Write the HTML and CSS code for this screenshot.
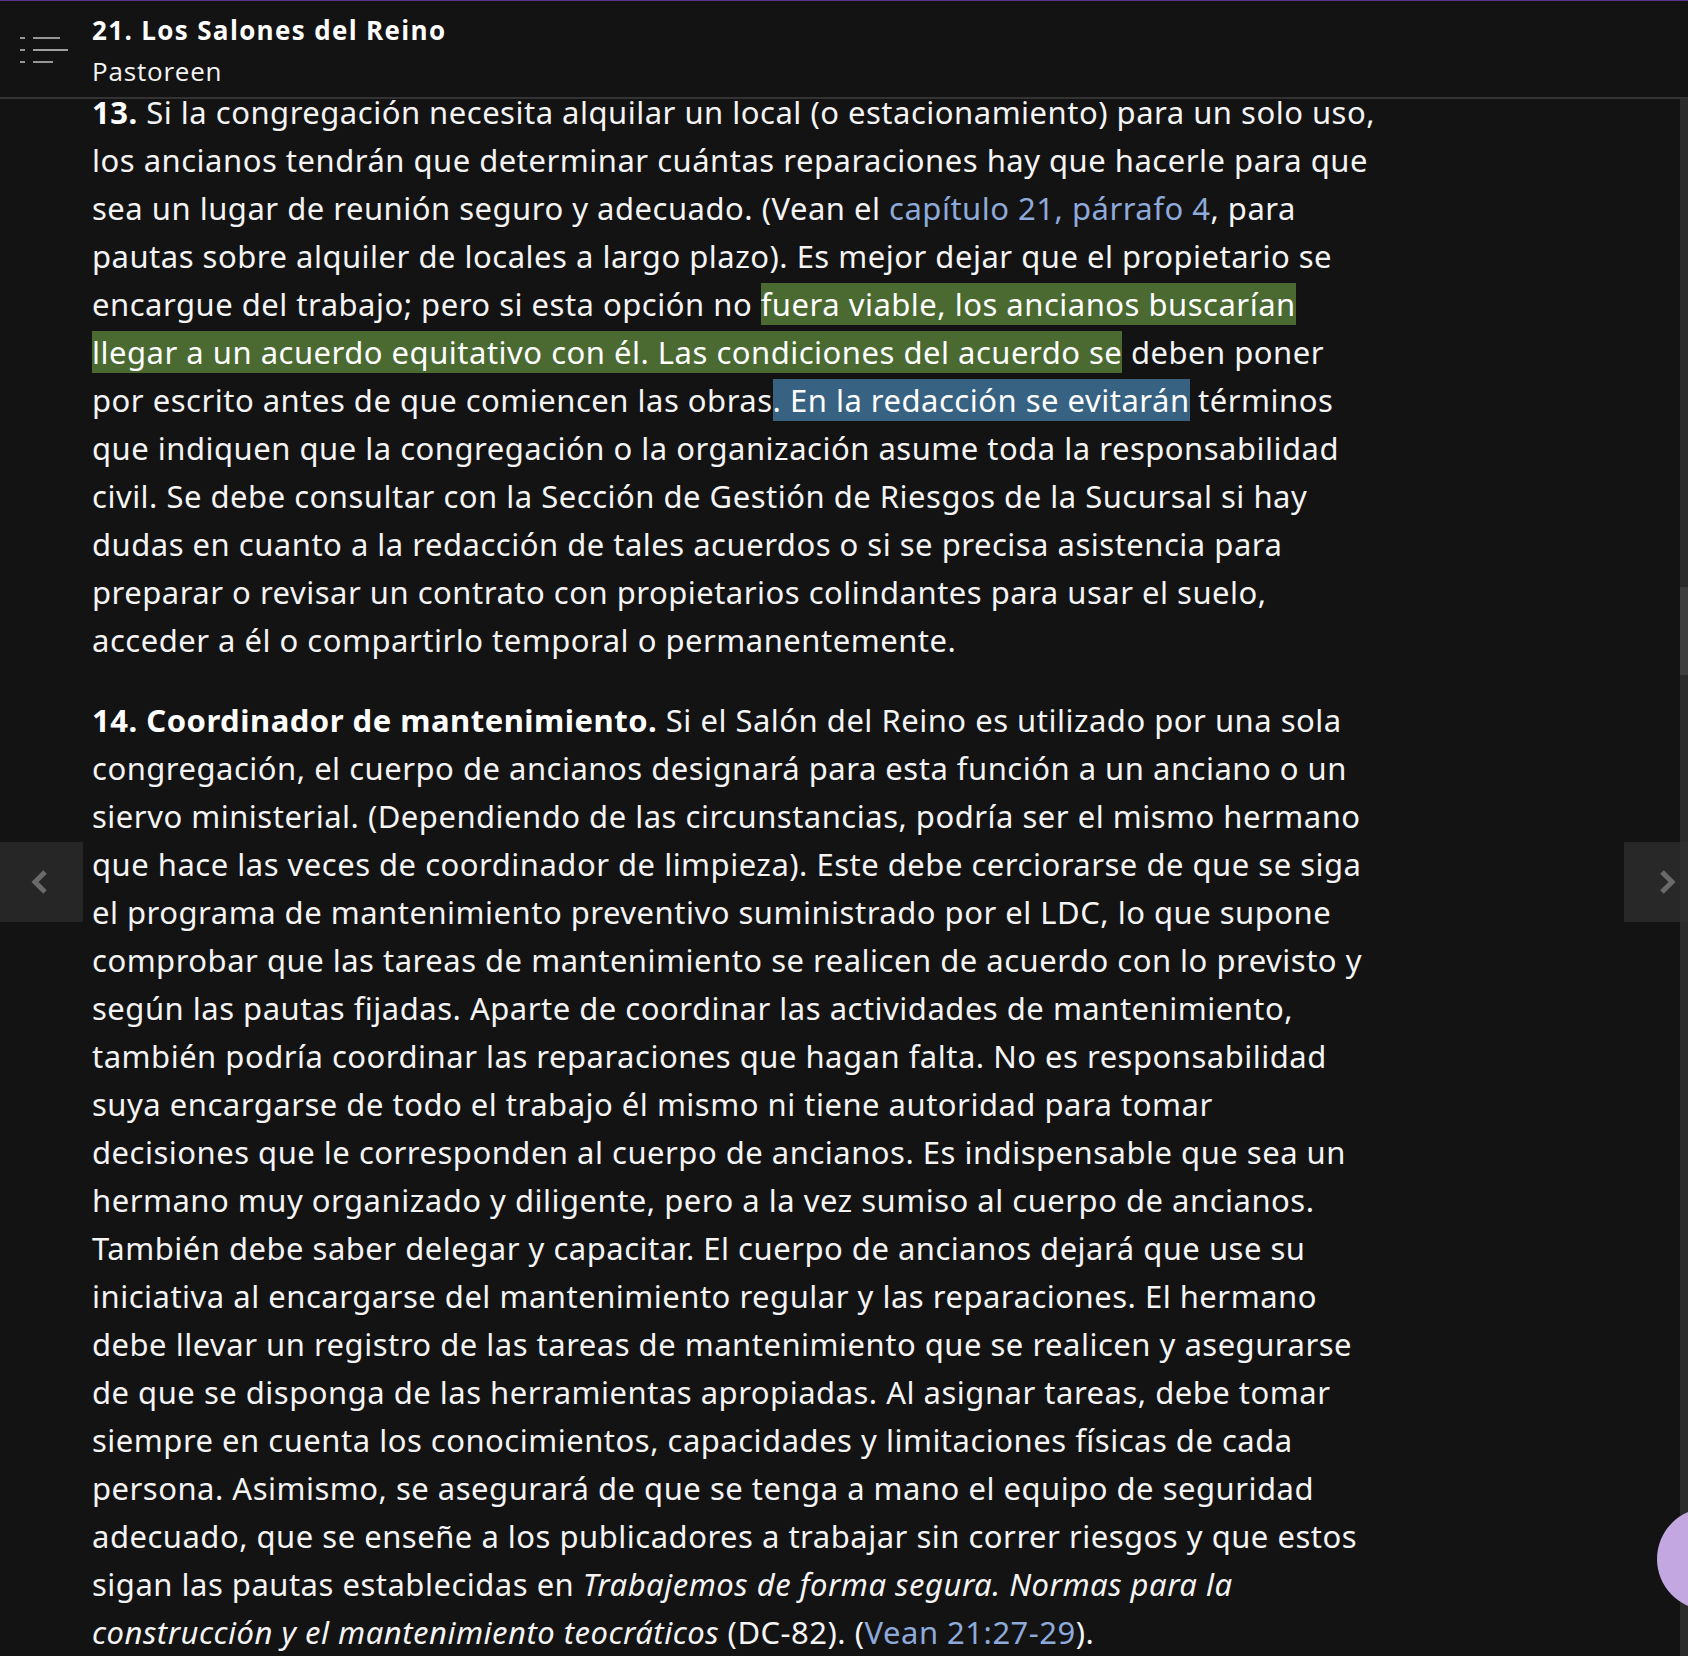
FILE: index.html
```html
<!DOCTYPE html>
<html lang="es">
<head>
<meta charset="utf-8">
<title>21. Los Salones del Reino</title>
<link rel="stylesheet" href="styles.css">
</head>
<body>
<div class="app">
  <header class="topbar">
    <button class="menu-btn" aria-label="Menú">
      <svg width="48" height="28" viewBox="0 0 48 28">
        <g stroke="#cfcfcf" stroke-width="1.4" fill="none">
          <line x1="0" y1="2" x2="5" y2="2"/>
          <line x1="13" y1="2" x2="40" y2="2"/>
          <line x1="0" y1="14" x2="5" y2="14"/>
          <line x1="13" y1="14" x2="48" y2="14"/>
          <line x1="0" y1="26" x2="5" y2="26"/>
          <line x1="13" y1="26" x2="33" y2="26"/>
        </g>
      </svg>
    </button>
    <div class="titles">
      <div class="title">21. Los Salones del Reino</div>
      <div class="subtitle">Pastoreen</div>
    </div>
  </header>
  <main class="main">
    <article class="content">
      <p><b>13.</b> Si la congregación necesita alquilar un local (o estacionamiento) para un solo uso, los ancianos tendrán que determinar cuántas reparaciones hay que hacerle para que sea un lugar de reunión seguro y adecuado. (Vean el <a href="#">capítulo 21, párrafo 4</a>, para pautas sobre alquiler de locales a largo plazo). Es mejor dejar que el propietario se encargue del trabajo; pero si esta opción no <mark class="hl-green">fuera viable, los ancianos buscarían llegar a un acuerdo equitativo con él. Las condiciones del acuerdo se</mark> deben poner por escrito antes de que comiencen las obras<mark class="hl-blue">. En la redacción se evitarán</mark> términos que indiquen que la congregación o la organización asume toda la responsabilidad civil. Se debe consultar con la Sección de Gestión de Riesgos de la Sucursal si hay dudas en cuanto a la redacción de tales acuerdos o si se precisa asistencia para preparar o revisar un contrato con propietarios colindantes para usar el suelo, acceder a él o compartirlo temporal o permanentemente.</p>
      <p><b>14. Coordinador de mantenimiento.</b> Si el Salón del Reino es utilizado por una sola congregación, el cuerpo de ancianos designará para esta función a un anciano o un siervo ministerial. (Dependiendo de las circunstancias, podría ser el mismo hermano que hace las veces de coordinador de limpieza). Este debe cerciorarse de que se siga el programa de mantenimiento preventivo suministrado por el LDC, lo que supone comprobar que las tareas de mantenimiento se realicen de acuerdo con lo previsto y según las pautas fijadas. Aparte de coordinar las actividades de mantenimiento, también podría coordinar las reparaciones que hagan falta. No es responsabilidad suya encargarse de todo el trabajo él mismo ni tiene autoridad para tomar decisiones que le corresponden al cuerpo de ancianos. Es indispensable que sea un hermano muy organizado y diligente, pero a la vez sumiso al cuerpo de ancianos. También debe saber delegar y capacitar. El cuerpo de ancianos dejará que use su iniciativa al encargarse del mantenimiento regular y las reparaciones. El hermano debe llevar un registro de las tareas de mantenimiento que se realicen y asegurarse de que se disponga de las herramientas apropiadas. Al asignar tareas, debe tomar siempre en cuenta los conocimientos, capacidades y limitaciones físicas de cada persona. Asimismo, se asegurará de que se tenga a mano el equipo de seguridad adecuado, que se enseñe a los publicadores a trabajar sin correr riesgos y que estos sigan las pautas establecidas en <i>Trabajemos de forma segura. Normas para la construcción y el mantenimiento teocráticos</i> (DC-82). (<a href="#">Vean 21:27-29</a>).</p>
    </article>
    <div class="scrollbar"><div class="thumb"></div></div>
    <button class="nav nav-prev" aria-label="Anterior">
      <svg width="20" height="24" viewBox="0 0 20 24"><path d="M16 2 L6 12 L16 22" stroke="#6a6a6a" stroke-width="5" fill="none"/></svg>
    </button>
    <button class="nav nav-next" aria-label="Siguiente">
      <svg width="20" height="24" viewBox="0 0 20 24"><path d="M4 2 L14 12 L4 22" stroke="#6a6a6a" stroke-width="5" fill="none"/></svg>
    </button>
    <div class="fab"></div>
  </main>
</div>
</body>
</html>
```

FILE: styles.css
```css
html, body {
  margin: 0;
  padding: 0;
  background: #131313;
  height: 100%;
  overflow: hidden;
}

.app {
  height: 100vh;
  display: flex;
  flex-direction: column;
  border-top: 1px solid #5b3596;
  box-sizing: border-box;
  background: #131313;
  color: #f4f4f4;
}

.topbar {
  height: 96px;
  flex: none;
  display: flex;
  align-items: flex-start;
  border-bottom: 2px solid #333333;
  background: #131313;
  position: relative;
  z-index: 2;
}

.menu-btn {
  background: none;
  border: 0;
  padding: 0;
  margin: 35px 0 0 20px;
  width: 48px;
  height: 28px;
  display: block;
}
.menu-btn svg { display: block; }

.titles {
  margin-left: 24px;
  padding-top: 9px;
  font-family: "Open Sans", "Noto Sans", sans-serif;
}

.title {
  font-size: 26px;
  font-weight: 700;
  line-height: 41px;
  letter-spacing: 1.35px;
  color: #ffffff;
}

.subtitle {
  font-size: 26px;
  font-weight: 400;
  line-height: 41px;
  letter-spacing: 0.8px;
  color: #f4f4f4;
}

.main {
  flex: 1;
  position: relative;
  overflow: hidden;
  display: flex;
}

.content {
  flex: 1;
  margin-top: -11px;
  padding-left: 92px;
  font-family: "Noto Sans", sans-serif;
  font-size: 31px;
  letter-spacing: 0.5px;
  line-height: 48px;
}

.content p {
  margin: 0 0 32px 0;
  width: 1284px;
}

.content b { font-weight: 700; color: #ffffff; }

.content a {
  color: #8eaadb;
  text-decoration: none;
}

mark {
  color: #ffffff;
}
.hl-green { background: #4a6a32; }
.hl-blue { background: #376281; }

.scrollbar {
  width: 8px;
  flex: none;
  background: #2b2b2b;
  position: relative;
}
.thumb {
  position: absolute;
  left: 0;
  right: 0;
  top: 488px;
  height: 88px;
  background: #3e3e3e;
}

.nav {
  position: absolute;
  top: 743px;
  height: 80px;
  border: 0;
  padding: 0;
  display: flex;
  align-items: center;
  justify-content: center;
}
.nav-prev {
  left: 0;
  width: 83px;
  background: #262626;
  justify-content: flex-start;
  padding-left: 29px;
  box-sizing: border-box;
}
.nav-next {
  right: 0;
  width: 64px;
  background: rgba(50, 50, 50, 0.7);
  justify-content: flex-start;
  padding-left: 34px;
  box-sizing: border-box;
}
.nav svg { display: block; }

.fab {
  position: absolute;
  left: 1657px;
  top: 1409px;
  width: 102px;
  height: 102px;
  border-radius: 50%;
  background: #c3a7e1;
}
```
